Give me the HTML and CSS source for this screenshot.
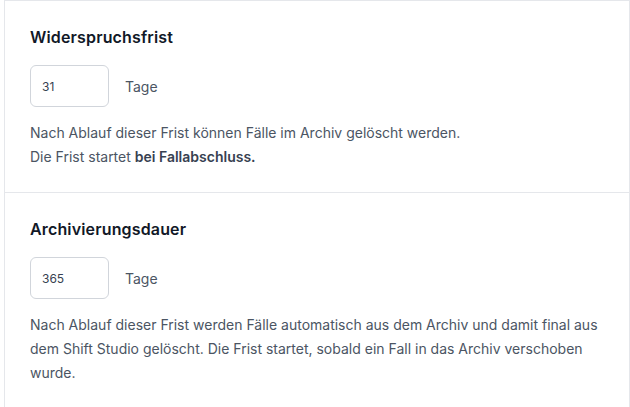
FILE: index.html
```html
<!DOCTYPE html>
<html lang="de">
<head>
  <meta charset="utf-8">
  <title>Fristen</title>
  <link rel="stylesheet" href="styles.css">
</head>
<body>

  <div class="card">
    <!-- Widerspruchsfrist -->
    <section class="setting">
      <h2>Widerspruchsfrist</h2>
      <div class="field">
        <input type="text" value="31" />
        <span class="unit">Tage</span>
      </div>
      <p class="hint">
        Nach Ablauf dieser Frist können Fälle im Archiv gelöscht werden.<br>
        Die Frist startet <strong>bei Fallabschluss.</strong>
      </p>
    </section>

    <!-- Archivierungsdauer -->
    <section class="setting">
      <h2>Archivierungsdauer</h2>
      <div class="field">
        <input type="text" value="365" />
        <span class="unit">Tage</span>
      </div>
      <p class="hint">
        Nach Ablauf dieser Frist werden Fälle automatisch aus dem Archiv und damit final aus dem Shift Studio gelöscht. Die Frist startet, sobald ein Fall in das Archiv verschoben wurde.
      </p>
    </section>
  </div>

</body>
</html>
```

FILE: styles.css
```css
* {
  box-sizing: border-box;
  margin: 0;
  padding: 0;
}

body {
  font-family: Inter, "Noto Sans", sans-serif;
  background: white;
  color: #111827;
  padding-left: 4px;
}

.card {
  width: 626px;
  background: white;
  border: 1px solid #e5e7eb;
  border-bottom: none;
}

.setting {
  padding: 24px 25px 23px 25px;
}

.setting + .setting {
  border-top: 1px solid #e5e7eb;
}

h2 {
  font-size: 16px;
  line-height: 24px;
  font-weight: 600;
  letter-spacing: 0.15px;
  color: #111827;
  margin-bottom: 16px;
}

.field {
  display: flex;
  align-items: center;
  gap: 16px;
  margin-bottom: 14px;
}

.field input {
  width: 79px;
  height: 42px;
  padding: 0 11px;
  border: 1px solid #d1d5db;
  border-radius: 6px;
  font-family: inherit;
  font-size: 12px;
  color: #374151;
  outline: none;
}

.unit {
  font-size: 14px;
  color: #4b5563;
}

.hint {
  font-size: 14px;
  line-height: 24px;
  color: #4b5563;
}

.hint strong {
  font-weight: 600;
  color: #374151;
}
```
